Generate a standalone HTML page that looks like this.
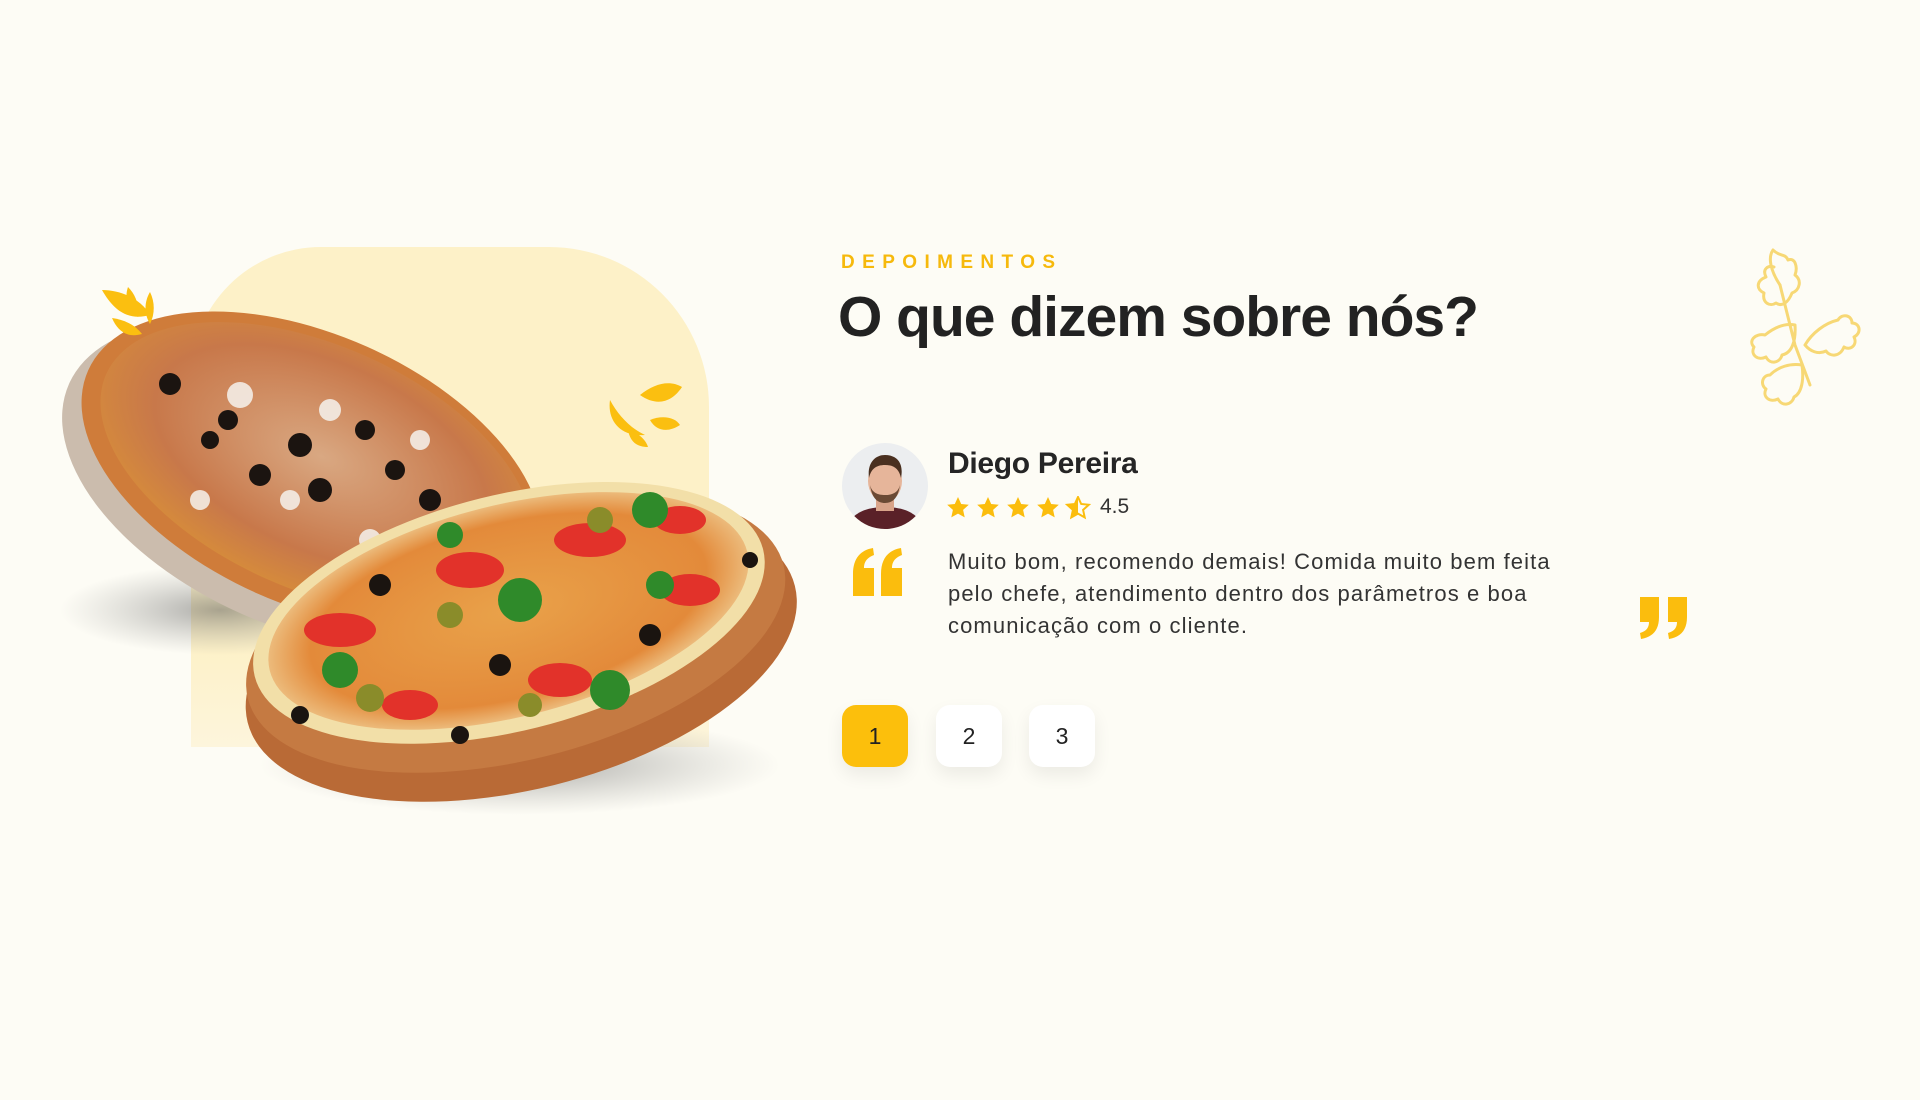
<!DOCTYPE html>
<html><head><meta charset="utf-8"><style>
*{margin:0;padding:0;box-sizing:border-box}
body{width:1920px;height:1100px;background:#fdfcf5;font-family:"Liberation Sans",sans-serif;position:relative;overflow:hidden;color:#1f1f1f}
.abs{position:absolute}
.blob{left:191px;top:247px;width:518px;height:500px;background:linear-gradient(#fdf1c8 80%,#fdf5dc 100%);border-radius:130px 160px 0 0}
.sub{left:841px;top:252px;font-size:19px;font-weight:bold;letter-spacing:7.4px;color:#f6b90c}
.h{left:838px;top:284px;font-size:57px;font-weight:bold;letter-spacing:-1px;color:#222}
.name{left:948px;top:447px;font-size:30px;font-weight:bold;color:#252525;letter-spacing:-0.3px}
.txt{left:948px;top:546px;font-size:22px;line-height:32px;color:#333;width:720px;letter-spacing:1.1px}
.btn{top:705px;width:66px;height:62px;border-radius:14px;background:#fff;box-shadow:0 8px 18px rgba(0,0,0,.07);font-size:23px;text-align:center;line-height:62px;color:#222}
</style></head><body>
<div class="abs blob"></div>
<svg class="abs" style="left:0;top:0" width="820" height="900" viewBox="0 0 820 900">
<defs>
<radialGradient id="sh" cx="50%" cy="50%" r="50%"><stop offset="0" stop-color="#555" stop-opacity=".5"/><stop offset="1" stop-color="#888" stop-opacity="0"/></radialGradient>
<radialGradient id="p1" cx="50%" cy="45%" r="55%"><stop offset="0" stop-color="#d9a882"/><stop offset=".7" stop-color="#c8784a"/><stop offset="1" stop-color="#d58a3c"/></radialGradient>
<radialGradient id="p2" cx="50%" cy="50%" r="55%"><stop offset="0" stop-color="#e9a24a"/><stop offset=".75" stop-color="#e38a3a"/><stop offset="1" stop-color="#f1d6a0"/></radialGradient>
</defs>
<ellipse cx="220" cy="610" rx="160" ry="45" fill="url(#sh)"/>
<ellipse cx="520" cy="765" rx="260" ry="50" fill="url(#sh)"/>
<g transform="rotate(24 312 470)">
<ellipse cx="305" cy="490" rx="250" ry="140" fill="#cbbcad"/>
<ellipse cx="312" cy="470" rx="245" ry="135" fill="#cf7c3a"/>
<ellipse cx="315" cy="466" rx="230" ry="122" fill="url(#p1)"/>
</g>
<g fill="#1b1410">
<circle cx="170" cy="384" r="11"/><circle cx="228" cy="420" r="10"/><circle cx="300" cy="445" r="12"/><circle cx="320" cy="490" r="12"/><circle cx="260" cy="475" r="11"/><circle cx="365" cy="430" r="10"/><circle cx="395" cy="470" r="10"/><circle cx="430" cy="500" r="11"/><circle cx="210" cy="440" r="9"/></g>
<g fill="#f6f3ee" opacity=".85"><circle cx="240" cy="395" r="13"/><circle cx="330" cy="410" r="11"/><circle cx="290" cy="500" r="10"/><circle cx="370" cy="540" r="11"/><circle cx="200" cy="500" r="10"/><circle cx="420" cy="440" r="10"/></g>
<g transform="rotate(-14 514 625)">
<ellipse cx="514" cy="655" rx="282" ry="135" fill="#b96a36"/>
<ellipse cx="514" cy="632" rx="276" ry="128" fill="#c57a42"/>
<ellipse cx="512" cy="612" rx="262" ry="118" fill="#f2dfa8"/>
<ellipse cx="512" cy="610" rx="246" ry="106" fill="url(#p2)"/>
</g>
<g fill="#e2322a"><ellipse cx="340" cy="630" rx="36" ry="17"/><ellipse cx="470" cy="570" rx="34" ry="18"/><ellipse cx="590" cy="540" rx="36" ry="17"/><ellipse cx="560" cy="680" rx="32" ry="17"/><ellipse cx="410" cy="705" rx="28" ry="15"/><ellipse cx="690" cy="590" rx="30" ry="16"/><ellipse cx="680" cy="520" rx="26" ry="14"/></g>
<g fill="#2f8a2a"><circle cx="520" cy="600" r="22"/><circle cx="650" cy="510" r="18"/><circle cx="340" cy="670" r="18"/><circle cx="610" cy="690" r="20"/><circle cx="660" cy="585" r="14"/><circle cx="450" cy="535" r="13"/></g>
<g fill="#1a1410"><circle cx="380" cy="585" r="11"/><circle cx="500" cy="665" r="11"/><circle cx="650" cy="635" r="11"/><circle cx="460" cy="735" r="9"/><circle cx="300" cy="715" r="9"/><circle cx="750" cy="560" r="8"/></g>
<g fill="#8a8c2a"><circle cx="450" cy="615" r="13"/><circle cx="370" cy="698" r="14"/><circle cx="530" cy="705" r="12"/><circle cx="600" cy="520" r="13"/></g>
<g fill="#fbbf10">
<path d="M102 290c20 0 40 10 48 25c-18 5-34 0-48-25z"/><path d="M128 287c8 8 12 20 10 30c-10-8-14-18-10-30z"/><path d="M150 292c5 10 5 22 0 32c-6-10-6-22 0-32z"/><path d="M112 318c14 2 24 8 30 16c-14 4-24-2-30-16z"/>
<path d="M610 400c8 15 20 28 35 35c-25 2-38-15-35-35z"/><path d="M640 395c15-12 30-15 42-8c-10 15-25 20-42 8z"/><path d="M650 420c12-5 25-3 30 5c-12 8-24 6-30-5z"/><path d="M628 430c10 2 18 10 20 17c-12 0-18-6-20-17z"/>
</g>
</svg>
<svg class="abs" style="left:1740px;top:245px" width="130" height="170" viewBox="0 0 130 170" fill="none" stroke="#f7d875" stroke-width="3" stroke-linecap="round" stroke-linejoin="round">
<path d="M70 140L55 100L40 40"/>
<path d="M40 40C30 25 28 12 33 5C40 12 45 8 48 15C55 12 58 22 55 30C62 35 60 45 52 48C48 58 42 62 36 58C30 62 22 58 24 48C16 44 16 36 26 32C22 24 28 20 34 22"/>
<path d="M55 80C45 78 35 82 25 90C15 88 8 96 14 102C10 110 18 116 26 112C30 120 40 118 42 110C52 108 56 96 55 80"/>
<path d="M65 100C72 88 85 78 98 75C102 68 112 70 112 78C120 78 122 88 114 92C118 100 110 106 104 102C100 112 90 112 86 106C78 110 70 106 65 100"/>
<path d="M62 120C50 118 38 122 30 130C22 130 20 140 26 144C22 152 30 158 38 154C42 162 52 160 54 152C62 148 64 134 62 120"/>
</svg>
<div class="abs sub">DEPOIMENTOS</div>
<div class="abs h">O que dizem sobre nós?</div>
<svg class="abs" style="left:842px;top:443px" width="86" height="86" viewBox="0 0 86 86">
<defs><clipPath id="c"><circle cx="43" cy="43" r="43"/></clipPath></defs>
<g clip-path="url(#c)"><rect width="86" height="86" fill="#eceef0"/>
<path d="M5 86C8 70 25 64 43 64C61 64 78 70 81 86Z" fill="#5a2128"/>
<rect x="34" y="52" width="18" height="16" fill="#d9a48a"/>
<ellipse cx="43" cy="38" rx="17" ry="21" fill="#e6b59a"/>
<path d="M27 35C25 20 33 12 43 12C55 12 62 20 59 35C57 26 52 22 43 22C34 22 29 26 27 35Z" fill="#4a3020"/>
<path d="M28 42C30 56 36 60 43 60C50 60 56 56 58 42C56 50 50 52 43 52C36 52 30 50 28 42Z" fill="#6b4a35"/>
</g></svg>
<div class="abs name">Diego Pereira</div>
<svg class="abs" style="left:946px;top:496px" width="150" height="24" viewBox="0 0 150 24">
<g fill="#fbbd0d">
<path id="s" d="M12 1l3.2 7 7.6.8-5.7 5.1 1.6 7.5L12 17.6l-6.7 3.8 1.6-7.5L1.2 8.8l7.6-.8z"/>
<use href="#s" x="30"/><use href="#s" x="60"/><use href="#s" x="90"/>
</g>
<path d="M132 1l3.2 7 7.6.8-5.7 5.1 1.6 7.5L132 17.6l-6.7 3.8 1.6-7.5-5.7-5.1 7.6-.8z" fill="none" stroke="#fbbd0d" stroke-width="2"/>
<path d="M132 1l-3.2 7-7.6.8 5.7 5.1-1.6 7.5L132 17.6z" fill="#fbbd0d"/>
</svg>
<div class="abs" style="left:1100px;top:495px;font-size:21px;color:#333">4.5</div>
<svg class="abs" style="left:853px;top:548px" width="50" height="50" viewBox="0 0 50 50" fill="#fbbd0d">
<path d="M0 26C0 10 8 2 20 0L21 7C13 10 11 15 11 20H21V48H0Z"/>
<path d="M28 26C28 10 36 2 48 0L49 7C41 10 39 15 39 20H49V48H28Z"/>
</svg>
<svg class="abs" style="left:1637px;top:597px" width="50" height="42" viewBox="0 0 50 42" fill="#fbbd0d" transform="rotate(180)">
<path d="M0 22C0 8 7 2 18 0L19 6C12 8 10 12 10 17H19V42H0Z"/>
<path d="M28 22C28 8 35 2 46 0L47 6C40 8 38 12 38 17H47V42H28Z"/>
</svg>
<div class="abs txt">Muito bom, recomendo demais! Comida muito bem feita<br>pelo chefe, atendimento dentro dos parâmetros e boa<br>comunicação com o cliente.</div>
<div class="abs btn" style="left:842px;background:#fcbf0c">1</div>
<div class="abs btn" style="left:936px">2</div>
<div class="abs btn" style="left:1029px">3</div>
</body></html>
